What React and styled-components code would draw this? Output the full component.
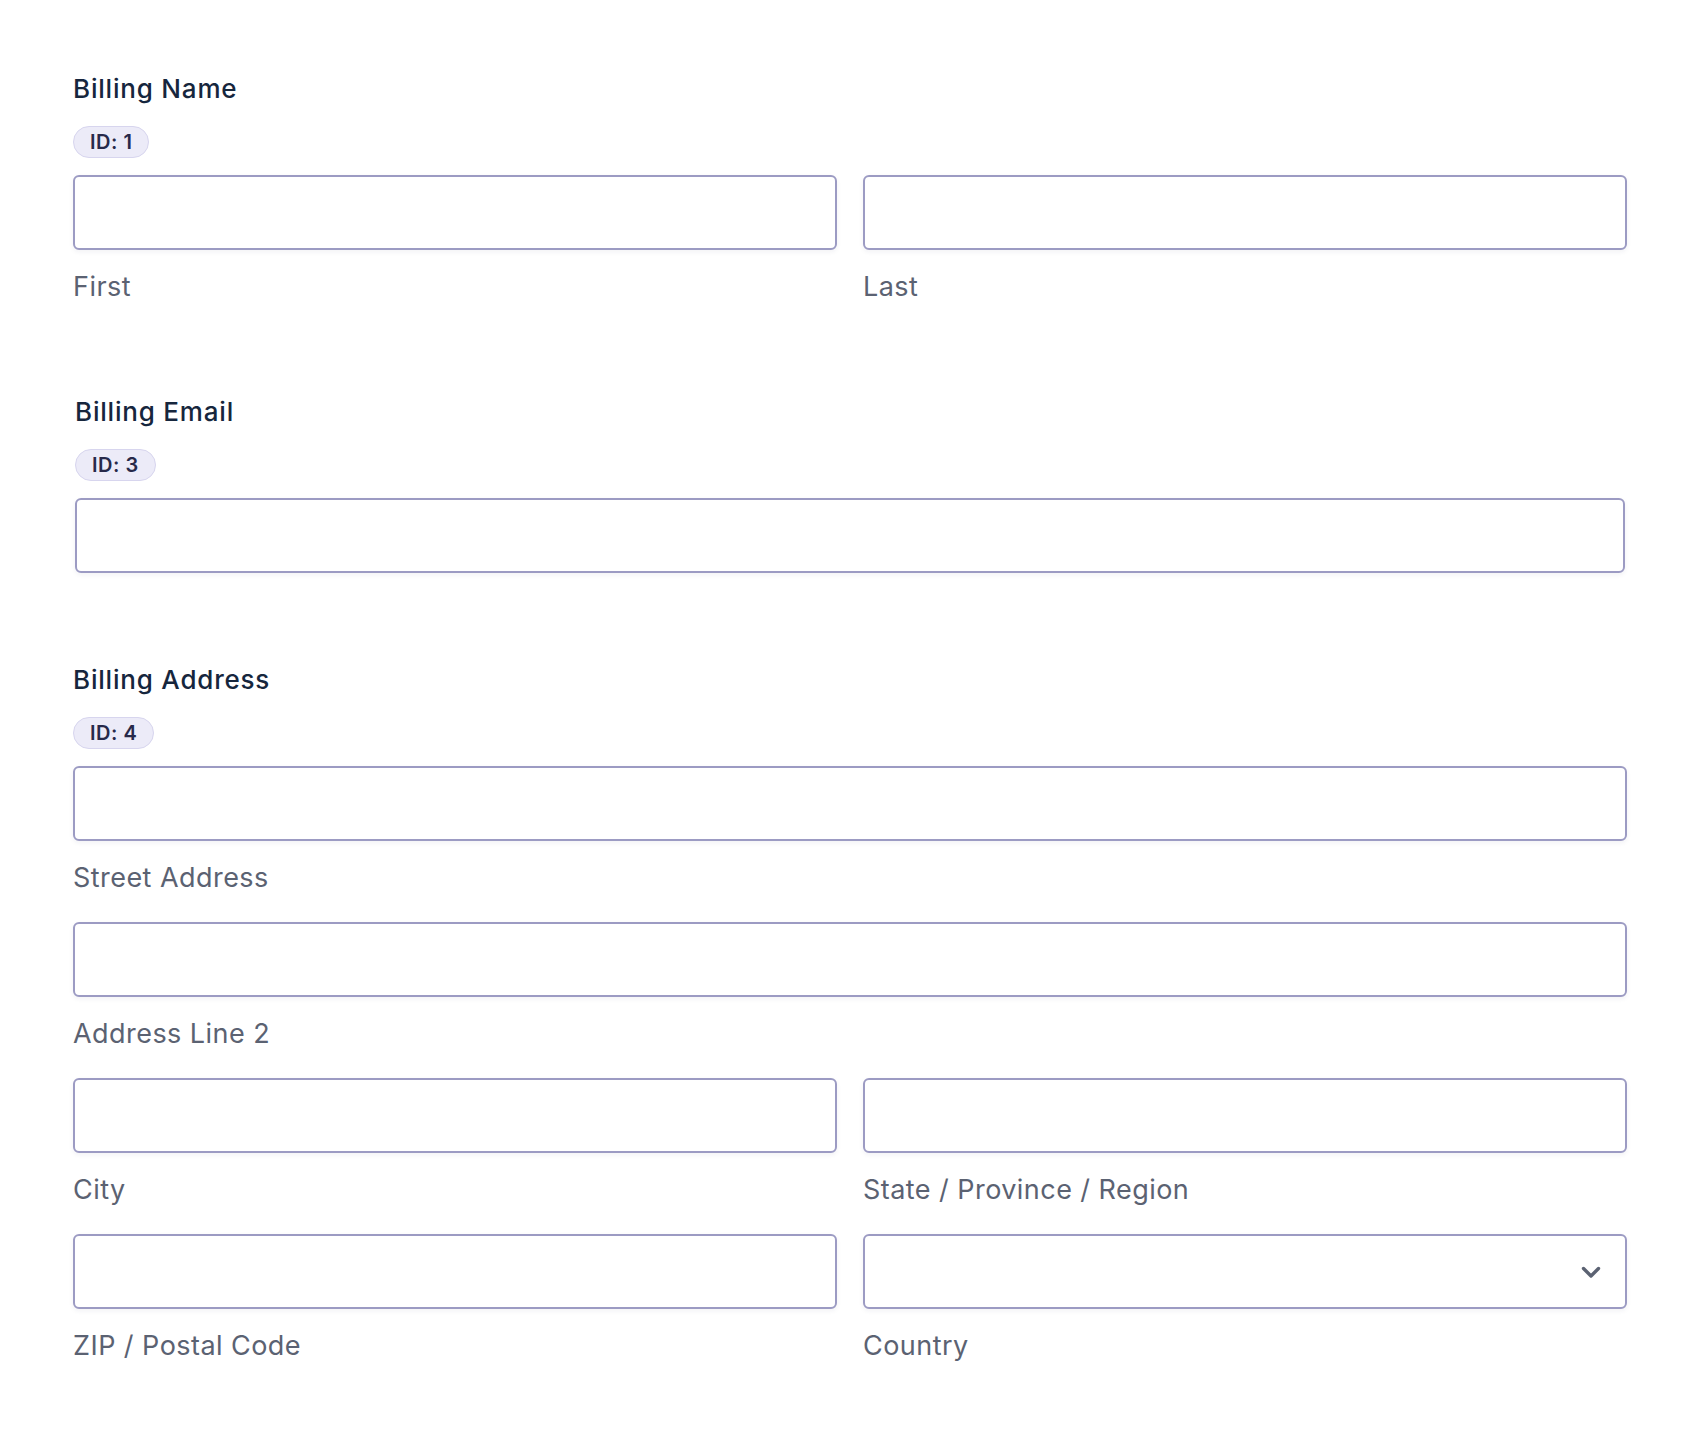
import styled, { createGlobalStyle } from 'styled-components'

const GlobalStyle = createGlobalStyle`
    body {
        margin: 0;
        background: #ffffff;
        font-family: Inter, "Noto Sans", sans-serif;
    }
`

const Page = styled.div`
    padding: 72px 73px 60px;
    display: flex;
    flex-direction: column;
    gap: 87px;
`

const Section = styled.section`
    display: flex;
    flex-direction: column;
    padding: 0 ${p => p.$inset || 0}px;
    margin-bottom: ${p => p.$extra || 0}px;
`

const Heading = styled.h2`
    margin: 0 0 20px;
    font-size: 26px;
    line-height: 34px;
    font-weight: 500;
    letter-spacing: 0.8px;
    color: #16263d;
`

const Badge = styled.span`
    align-self: flex-start;
    box-sizing: border-box;
    height: 32px;
    padding: 0 16px;
    display: inline-flex;
    align-items: center;
    border-radius: 16px;
    background: #ecebf8;
    border: 1px solid #d7d5ee;
    color: #27294a;
    font-size: 20px;
    font-weight: 600;
    letter-spacing: 0.5px;
    margin-bottom: 17px;
`

const Rows = styled.div`
    display: flex;
    flex-direction: column;
    gap: 23px;
`

const Row = styled.div`
    display: grid;
    grid-template-columns: ${p => (p.$cols === 2 ? '1fr 1fr' : '1fr')};
    column-gap: 26px;
`

const Field = styled.div`
    display: flex;
    flex-direction: column;
    min-width: 0;
`

const Input = styled.input`
    box-sizing: border-box;
    width: 100%;
    height: 75px;
    border: 2px solid #9c9bc3;
    border-radius: 6px;
    background: #fff;
    box-shadow: 0 2px 5px rgba(40, 40, 80, 0.06);
    font-family: inherit;
    font-size: 24px;
    padding: 0 16px;
    outline: none;
`

const SelectWrap = styled.div`
    position: relative;
`

const Select = styled.select`
    box-sizing: border-box;
    width: 100%;
    height: 75px;
    border: 2px solid #9c9bc3;
    border-radius: 6px;
    background: #fff;
    box-shadow: 0 2px 5px rgba(40, 40, 80, 0.06);
    appearance: none;
    font-family: inherit;
    font-size: 24px;
    padding: 0 16px;
    outline: none;
`

const Chevron = styled.svg`
    position: absolute;
    right: 25px;
    top: 50%;
    transform: translateY(-50%);
    pointer-events: none;
`

const SubLabel = styled.label`
    margin-top: 16px;
    font-size: 27px;
    line-height: 42px;
    letter-spacing: 0.45px;
    color: #5b6272;
`

function TextField({ label }) {
    return (
        <Field>
            <Input type="text" />
            {label && <SubLabel>{label}</SubLabel>}
        </Field>
    )
}

export default function App() {
    return (
        <>
            <GlobalStyle />
            <Page>
                <Section>
                    <Heading>Billing Name</Heading>
                    <Badge>ID: 1</Badge>
                    <Row $cols={2}>
                        <TextField label="First" />
                        <TextField label="Last" />
                    </Row>
                </Section>

                <Section $inset={2} $extra={3}>
                    <Heading>Billing Email</Heading>
                    <Badge>ID: 3</Badge>
                    <Row>
                        <TextField />
                    </Row>
                </Section>

                <Section>
                    <Heading>Billing Address</Heading>
                    <Badge>ID: 4</Badge>
                    <Rows>
                        <Row>
                            <TextField label="Street Address" />
                        </Row>
                        <Row>
                            <TextField label="Address Line 2" />
                        </Row>
                        <Row $cols={2}>
                            <TextField label="City" />
                            <TextField label="State / Province / Region" />
                        </Row>
                        <Row $cols={2}>
                            <TextField label="ZIP / Postal Code" />
                            <Field>
                                <SelectWrap>
                                    <Select defaultValue="">
                                        <option value=""></option>
                                    </Select>
                                    <Chevron width="22" height="14" viewBox="0 0 22 14">
                                        <path d="M3.5 3.5l7.5 7.5 7.5-7.5" fill="none" stroke="#5b6272" strokeWidth="3.4" strokeLinecap="round" strokeLinejoin="round" />
                                    </Chevron>
                                </SelectWrap>
                                <SubLabel>Country</SubLabel>
                            </Field>
                        </Row>
                    </Rows>
                </Section>
            </Page>
        </>
    )
}
